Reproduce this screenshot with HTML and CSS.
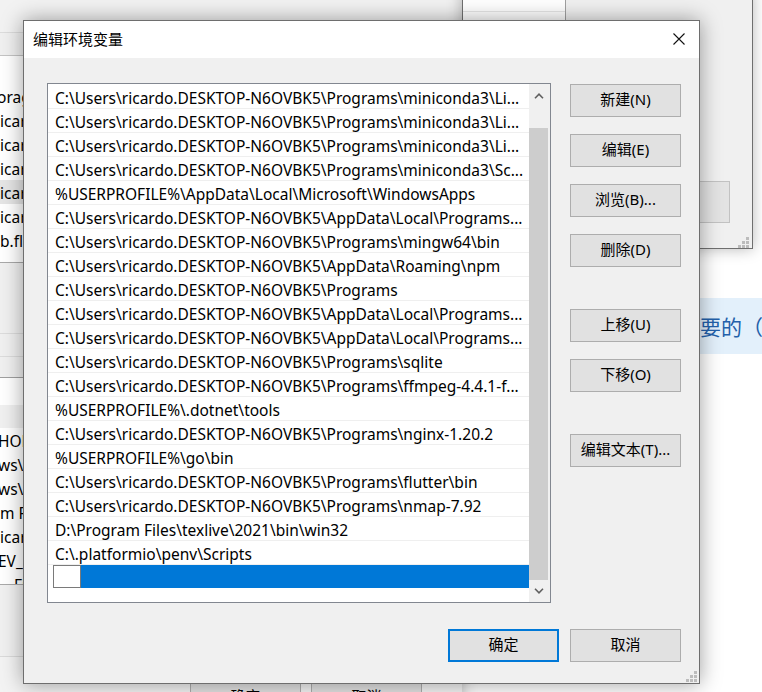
FILE: index.html
```html
<!DOCTYPE html>
<html lang="zh-CN">
<head>
<meta charset="utf-8">
<title>编辑环境变量</title>
<link rel="stylesheet" href="styles.css">
</head>
<body>
<div class="desktop">
  <div class="page">
    <div class="band"><span class="band-text">需要的（</span></div>
  </div>

  <div class="win win-left">
    <div class="bk-head"></div>
    <div class="bk-bar"></div>
    <div class="bk-list bk-list1">
      <div class="bk-row bk-o">orag</div>
      <div class="bk-row">icar</div>
      <div class="bk-row">icar</div>
      <div class="bk-row">icar</div>
      <div class="bk-row bk-row-hover">icar</div>
      <div class="bk-row">icar</div>
      <div class="bk-row">b.fl</div>
    </div>
    <div class="bk-sec bk-sec1"></div>
    <div class="bk-sec bk-sec2"></div>
    <div class="bk-sec bk-sec3"></div>
    <div class="bk-white"></div>
    <div class="bk-hdr"></div>
    <div class="bk-list bk-list2">
      <div class="bk-row bk-cut">HOM</div>
      <div class="bk-row bk-cut">ws\s</div>
      <div class="bk-row bk-cut">ws\S</div>
      <div class="bk-row">m Fi</div>
      <div class="bk-row">icar</div>
      <div class="bk-row bk-cut">EV_</div>
      <div class="bk-row bk-last">Fi</div>
    </div>
    <div class="bk-foot1"></div>
    <div class="bk-foot2">
      <div class="bk-btn">确定</div>
      <div class="bk-btn">取消</div>
    </div>
  </div>

  <div class="win win-right">
    <div class="wr-list"><div class="wr-list-row"></div></div>
    <div class="wr-bottom"><div class="wr-btn"></div></div>
    <svg class="grip grip-right" width="11" height="11" viewBox="0 0 11 11" aria-hidden="true">
      <rect x="8" y="0" width="3" height="3"/>
      <rect x="4" y="4" width="3" height="3"/><rect x="8" y="4" width="3" height="3"/>
      <rect x="0" y="8" width="3" height="3"/><rect x="4" y="8" width="3" height="3"/><rect x="8" y="8" width="3" height="3"/>
    </svg>
  </div>

  <div class="dialog">
    <div class="titlebar">
      <span class="title">编辑环境变量</span>
      <svg class="close" width="12" height="12" viewBox="0 0 12 12" aria-hidden="true">
        <path d="M0.5 0.5 L11.5 11.5 M11.5 0.5 L0.5 11.5" stroke="#111" stroke-width="1.1" fill="none"/>
      </svg>
    </div>
    <div class="content">
      <div class="listbox">
        <div class="rows">
          <div class="row">C:\Users\ricardo.DESKTOP-N6OVBK5\Programs\miniconda3\Li...</div>
          <div class="row">C:\Users\ricardo.DESKTOP-N6OVBK5\Programs\miniconda3\Li...</div>
          <div class="row">C:\Users\ricardo.DESKTOP-N6OVBK5\Programs\miniconda3\Li...</div>
          <div class="row">C:\Users\ricardo.DESKTOP-N6OVBK5\Programs\miniconda3\Sc...</div>
          <div class="row">%USERPROFILE%\AppData\Local\Microsoft\WindowsApps</div>
          <div class="row">C:\Users\ricardo.DESKTOP-N6OVBK5\AppData\Local\Programs...</div>
          <div class="row">C:\Users\ricardo.DESKTOP-N6OVBK5\Programs\mingw64\bin</div>
          <div class="row">C:\Users\ricardo.DESKTOP-N6OVBK5\AppData\Roaming\npm</div>
          <div class="row">C:\Users\ricardo.DESKTOP-N6OVBK5\Programs</div>
          <div class="row">C:\Users\ricardo.DESKTOP-N6OVBK5\AppData\Local\Programs...</div>
          <div class="row">C:\Users\ricardo.DESKTOP-N6OVBK5\AppData\Local\Programs...</div>
          <div class="row">C:\Users\ricardo.DESKTOP-N6OVBK5\Programs\sqlite</div>
          <div class="row">C:\Users\ricardo.DESKTOP-N6OVBK5\Programs\ffmpeg-4.4.1-f...</div>
          <div class="row">%USERPROFILE%\.dotnet\tools</div>
          <div class="row">C:\Users\ricardo.DESKTOP-N6OVBK5\Programs\nginx-1.20.2</div>
          <div class="row">%USERPROFILE%\go\bin</div>
          <div class="row">C:\Users\ricardo.DESKTOP-N6OVBK5\Programs\flutter\bin</div>
          <div class="row">C:\Users\ricardo.DESKTOP-N6OVBK5\Programs\nmap-7.92</div>
          <div class="row">D:\Program Files\texlive\2021\bin\win32</div>
          <div class="row">C:\.platformio\penv\Scripts</div>
          <div class="row row-edit">
            <div class="edit"></div>
            <div class="sel"></div>
          </div>
        </div>
        <div class="scrollbar">
          <div class="sb-btn sb-up">
            <svg width="10" height="6" viewBox="0 0 10 6" aria-hidden="true"><path d="M1 5.2 L5 1.2 L9 5.2" stroke="#606060" stroke-width="1.6" fill="none"/></svg>
          </div>
          <div class="sb-gap"></div>
          <div class="sb-thumb"></div>
          <div class="sb-btn sb-down">
            <svg width="10" height="6" viewBox="0 0 10 6" aria-hidden="true"><path d="M1 0.8 L5 4.8 L9 0.8" stroke="#606060" stroke-width="1.6" fill="none"/></svg>
          </div>
        </div>
      </div>
      <div class="side">
        <div class="btn">新建(N)</div>
        <div class="btn">编辑(E)</div>
        <div class="btn">浏览(B)...</div>
        <div class="btn">删除(D)</div>
        <div class="btn btn-sep">上移(U)</div>
        <div class="btn">下移(O)</div>
        <div class="btn btn-sep">编辑文本(T)...</div>
      </div>
    </div>
    <div class="footer">
      <div class="btn btn-default">确定</div>
      <div class="btn">取消</div>
    </div>
    <svg class="grip grip-dialog" width="11" height="11" viewBox="0 0 11 11" aria-hidden="true">
      <rect x="8" y="0" width="3" height="3"/>
      <rect x="4" y="4" width="3" height="3"/><rect x="8" y="4" width="3" height="3"/>
      <rect x="0" y="8" width="3" height="3"/><rect x="4" y="8" width="3" height="3"/><rect x="8" y="8" width="3" height="3"/>
    </svg>
  </div>
</div>
</body>
</html>
```
FILE: styles.css
```css
html, body {
  margin: 0;
  padding: 0;
}
body {
  width: 762px;
  height: 692px;
  overflow: hidden;
  background: #ffffff;
  font-family: "Noto Sans", "Noto Sans CJK SC", sans-serif;
  font-size: 15px;
  color: #000;
}
.desktop {
  position: relative;
  width: 762px;
  height: 692px;
  overflow: hidden;
}

/* ---------- page behind everything ---------- */
.page {
  position: absolute;
  left: 0;
  top: 0;
  width: 762px;
  height: 692px;
  background: #fff;
  padding-top: 298px;
  box-sizing: border-box;
}
.band {
  margin-left: 600px;
  height: 56px;
  background: #e3f0fb;
  display: flex;
  align-items: center;
  padding-left: 79px;
  white-space: nowrap;
}
.band-text {
  font-family: "Noto Sans CJK SC", sans-serif;
  font-size: 21px;
  color: #2360aa;
}

/* ---------- background windows ---------- */
.win {
  position: absolute;
  box-sizing: border-box;
  background: #f0f0f0;
  box-shadow: 0 0 14px rgba(0, 0, 0, 0.28);
}
.win-left {
  left: -20px;
  top: 0;
  width: 482px;
  height: 730px;
  display: flex;
  flex-direction: column;
}
.bk-head {
  height: 33px;
  flex: none;
  background: #f2f2f2;
  border-bottom: 1px solid #dcdcdc;
  box-sizing: border-box;
}
.bk-bar {
  height: 23px;
  flex: none;
  background: #f0f0f0;
  border-bottom: 1px solid #c4c4c4;
  box-sizing: border-box;
}
.bk-list {
  flex: none;
  background: #fff;
  box-sizing: border-box;
  overflow: hidden;
  border-bottom: 1px solid #a9a9a9;
  font-size: 15.5px;
}
.bk-list1 {
  height: 207px;
  padding-top: 28px;
}
.bk-list2 {
  height: 157px;
}
.bk-row {
  height: 24px;
  line-height: 22px;
  padding-top: 2px;
  box-sizing: border-box;
  white-space: nowrap;
  padding-left: 20px;
}
.bk-o {
  padding-left: 17px;
}
.bk-cut {
  padding-left: 18px;
}
.bk-last {
  padding-left: 34px;
}
.bk-row-hover {
  background: #e5e5e5;
}
.bk-sec {
  flex: none;
  box-sizing: border-box;
  border-bottom: 1px solid #dcdcdc;
}
.bk-sec1 { height: 71px; }
.bk-sec2 { height: 23px; }
.bk-sec3 { height: 21px; border-bottom-color: #a0a0a0; }
.bk-white {
  flex: none;
  height: 27px;
  background: #fff;
}
.bk-hdr {
  flex: none;
  height: 23px;
  background: #f0f0f0;
}
.bk-foot1 {
  flex: none;
  height: 72px;
  border-bottom: 1px solid #dadada;
  box-sizing: border-box;
}
.bk-foot2 {
  flex: 1;
  background: #f3f3f3;
  display: flex;
  gap: 10px;
  padding: 22px 0 0 210px;
}
.bk-btn {
  width: 111px;
  height: 33px;
  box-sizing: border-box;
  border: 1px solid #adadad;
  background: #e1e1e1;
  display: flex;
  align-items: center;
  justify-content: center;
  font-family: "Noto Sans CJK SC", sans-serif;
}

.win-right {
  left: 462px;
  top: -10px;
  width: 291px;
  height: 259px;
  border: 1px solid #6f6f6f;
  display: flex;
  flex-direction: column;
}
.wr-list {
  width: 103px;
  height: 60px;
  background: #fff;
  border-right: 1px solid #a0a0a0;
  box-sizing: border-box;
  padding-top: 20px;
}
.wr-list-row {
  height: 1px;
  background: #e6e6e6;
}
.wr-bottom {
  flex: 1;
  display: flex;
  justify-content: flex-end;
  align-items: flex-end;
  padding: 0 22px 25px 0;
}
.wr-btn {
  width: 111px;
  height: 42px;
  box-sizing: border-box;
  border: 1px solid #c2c2c2;
  background: #e3e3e3;
}
.grip {
  position: absolute;
  fill: #bcbcbc;
}
.grip-right {
  right: 3px;
  bottom: 0px;
}

/* ---------- dialog ---------- */
.dialog {
  position: absolute;
  left: 23px;
  top: 20px;
  width: 677px;
  height: 664px;
  box-sizing: border-box;
  border: 1px solid #6e6e6e;
  background: #f0f0f0;
  box-shadow: 0 0 20px rgba(0, 0, 0, 0.38);
  display: flex;
  flex-direction: column;
}
.titlebar {
  height: 37px;
  flex: none;
  background: #fff;
  display: flex;
  align-items: center;
  padding: 0 14px 2px 9px;
  box-sizing: border-box;
}
.title {
  font-family: "Noto Sans CJK SC", sans-serif;
  font-size: 15px;
  color: #000;
}
.close {
  margin-left: auto;
  margin-top: 1px;
}
.content {
  display: flex;
  gap: 19px;
  padding: 25px 18px 0 23px;
}
.listbox {
  width: 504px;
  height: 520px;
  flex: none;
  box-sizing: border-box;
  border: 1px solid #828790;
  background: #fff;
  display: flex;
}
.rows {
  width: 481px;
  flex: none;
  padding-top: 1px;
  overflow: hidden;
  font-size: 15.5px;
}
.row {
  height: 24px;
  box-sizing: border-box;
  border-bottom: 1px solid #efefef;
  padding: 2px 0 0 7px;
  line-height: 22px;
  white-space: nowrap;
  overflow: hidden;
}
.row-edit {
  border-bottom: none;
  padding: 0 0 0 5px;
  display: flex;
}
.edit {
  width: 28px;
  height: 23px;
  box-sizing: border-box;
  border: 1px solid #7a7a7a;
  background: #fff;
}
.sel {
  flex: 1;
  height: 23px;
  background: #0078d7;
}
.scrollbar {
  width: 21px;
  flex: none;
  background: #f0f0f0;
  display: flex;
  flex-direction: column;
}
.sb-btn {
  display: flex;
  align-items: center;
  justify-content: center;
  padding-right: 2px;
}
.sb-up { height: 24px; }
.sb-gap { height: 20px; }
.sb-thumb {
  height: 452px;
  width: 19px;
  background: #cdcdcd;
}
.sb-down { flex: 1; }
.side {
  display: flex;
  flex-direction: column;
  gap: 17px;
  padding-top: 1px;
}
.btn {
  width: 111px;
  height: 33px;
  box-sizing: border-box;
  border: 1px solid #adadad;
  background: #e1e1e1;
  display: flex;
  align-items: center;
  justify-content: center;
  font-size: 15px;
  line-height: 1;
  padding-bottom: 2px;
  white-space: nowrap;
}
.btn-sep {
  margin-top: 25px;
}
.btn-default {
  border: 2px solid #0078d7;
}
.footer {
  display: flex;
  justify-content: flex-end;
  gap: 11px;
  padding: 26px 18px 0 0;
}
.grip-dialog {
  right: 2px;
  bottom: 1px;
}
```
